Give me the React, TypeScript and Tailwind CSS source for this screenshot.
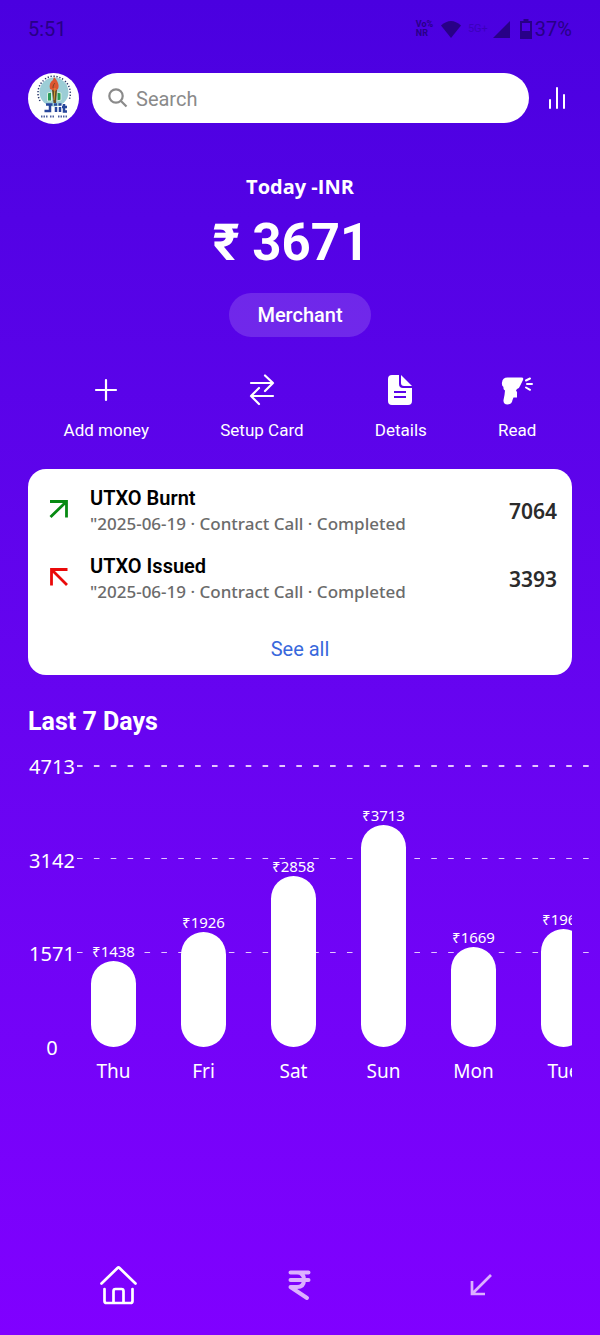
import type { ReactNode } from "react";

const days = [
  { day: "Thu", value: 1438 },
  { day: "Fri", value: 1926 },
  { day: "Sat", value: 2858 },
  { day: "Sun", value: 3713 },
  { day: "Mon", value: 1669 },
  { day: "Tue", value: 1965 },
];

const ticks = [4713, 3142, 1571, 0];
const axisMax = 4713;
const plotHeight = 282;

const transactions = [
  { title: "UTXO Burnt", amount: "7064", outgoing: true },
  { title: "UTXO Issued", amount: "3393", outgoing: false },
];

function StatusBar() {
  return (
    <div className="flex h-[58px] items-center justify-between text-[20px] text-[#280087]">
      <span>5:51</span>
      <div className="flex items-center">
        <span className="w-[19px] text-[9px] leading-[9px] font-bold">
          Vo%
          <br />
          NR
        </span>
        <svg className="ml-1 h-5 w-6" viewBox="0 0 24 20" aria-hidden="true">
          <path d="M2 6.5Q12-2.5 22 6.5L12 19z" fill="currentColor" />
        </svg>
        <span className="ml-1 w-[22px] text-center text-[11px] leading-3 opacity-40">5G+</span>
        <svg className="ml-1 h-5 w-[18px]" viewBox="0 0 18 20" aria-hidden="true">
          <path d="M17 2v17H0z" fill="currentColor" />
        </svg>
        <svg className="mr-[2px] ml-2 h-5 w-[14px]" viewBox="0 0 14 20" aria-hidden="true">
          <path d="M4.500 0h5v2H13v18H1V2h3.500zM3 4v8h8V4z" fill="currentColor" fillRule="evenodd" />
        </svg>
        <span>37%</span>
      </div>
    </div>
  );
}

function Crest() {
  return (
    <svg className="size-[51px] shrink-0" viewBox="0 0 51 51" role="img" aria-label="JIIT">
      <circle cx="25.500" cy="25.500" r="25.500" fill="#fff" />
      <circle cx="26" cy="19" r="14.500" fill="#9ccdd6" />
      <path
        d="M12 28A17 17 0 0 1 16 7M17 6Q26 0 36 7M37 8a17 17 0 0 1 4 19"
        fill="none"
        stroke="#27366b"
        strokeWidth="1.500"
        strokeDasharray="1.300 1.700"
      />
      <path d="M19.500 20l4-1v9h-4zM29 19l4 1v7l-4 1z" fill="#279a56" stroke="#d6efe0" />
      <path d="M24 17h5l-1 13h-2.500z" fill="#674a20" />
      <path d="M22 16c-1-4 0-7 3-9l1-3c3 3 6 8 4 12l-3 2z" fill="#dc5531" />
      <path d="M25 15c0-3 1-4 2-5" fill="none" stroke="#7b4524" />
      <path d="M27 15l-1 12" stroke="#d3a23a" />
      <path
        d="M18 31.500h6.500M22 31v7h-5.500M26 31.500h3M28 34v5M30.500 31.500h3M32 34v5M36 31v7.500h3M34 34h5"
        fill="none"
        stroke="#27469a"
        strokeWidth="2.500"
      />
      <path d="M13 43.500h7M22 43.500h5M30 43.500h9" stroke="#4e5fa0" strokeWidth="2" strokeDasharray="1.500 1" />
    </svg>
  );
}

function Header() {
  return (
    <header className="mt-[15px] flex items-start">
      <Crest />
      <div className="ml-[13px] flex h-[50px] min-w-0 flex-1 items-center rounded-full bg-white pl-4 text-[#8a8a8a]">
        <svg className="size-5 shrink-0" viewBox="0 0 20 20" fill="none" stroke="currentColor" strokeWidth="2.200" aria-hidden="true">
          <circle cx="8" cy="8" r="6.700" />
          <path d="M13 13l5.500 5.500" />
        </svg>
        <input
          type="search"
          aria-label="Search"
          placeholder="Search"
          className="ml-2 h-full min-w-0 flex-1 rounded-r-full bg-transparent pt-px text-[20px] outline-none placeholder:text-[#8a8a8a]"
        />
      </div>
      <button type="button" aria-label="Statistics" className="flex h-[50px] w-[43px] items-center justify-end pr-[5px] text-white">
        <svg className="h-[22px] w-5" viewBox="0 0 20 22" fill="none" stroke="currentColor" strokeWidth="2" strokeLinecap="round" aria-hidden="true">
          <path d="M3 13v8M10 1v20M17 8v13" />
        </svg>
      </button>
    </header>
  );
}

function Action({ label, children }: { label: string; children: ReactNode }) {
  return (
    <button type="button" className="flex flex-col items-center gap-3 text-[17px] leading-5 text-white">
      <svg className="size-9" viewBox="0 0 36 36" fill="none" stroke="currentColor" strokeWidth="2.200" strokeLinecap="round" strokeLinejoin="round" aria-hidden="true">
        {children}
      </svg>
      {label}
    </button>
  );
}

function Actions() {
  return (
    <div className="mt-[35px] flex justify-around">
      <Action label="Add money">
        <path d="M8 18h20M18 8v20" />
      </Action>
      <Action label="Setup Card">
        <path d="M7 11h22M21 3.500l8 7.500-8 8M29 24H7M15 16l-8 8 8 8" />
      </Action>
      <Action label="Details">
        <path
          d="M9 3h7v9a4 4 0 0 0 4 4h9v13a4 4 0 0 1-4 4H9a4 4 0 0 1-4-4V7a4 4 0 0 1 4-4zM11 19v2h12v-2zM11 24v2h12v-2z"
          fill="currentColor"
          fillRule="evenodd"
          stroke="none"
        />
        <path d="M18 3l11 11h-8a3 3 0 0 1-3-3z" fill="currentColor" stroke="none" />
      </Action>
      <Action label="Read">
        <path
          d="M8.500 5.500H22.500q2.500 0 1.500 2.500L21 14q-1 3-3 3l-1 1.500q1.500 1.500 1 3v4h-3.500l-1 2.500q-.5 4.500-5 4.500-4.500 0-4-4.500l1-5 .5-4.500q-2-1-1.500-3.500-2-1.500-1.500-4.500Q3.500 5.500 8.500 5.500z"
          fill="currentColor"
          stroke="none"
        />
        <path d="M27 8.500l4-2M28 12h5M27 15.500l4 2.300" strokeWidth="2" />
      </Action>
    </div>
  );
}

function Transactions() {
  return (
    <section className="mt-[29px] rounded-[18px] bg-white pt-4 pb-3">
      <ul>
        {transactions.map((t) => (
          <li key={t.title} className="flex h-[68px] items-start pr-[15px] pl-5">
            <svg
              className={t.outgoing ? "mt-3 size-[22px] text-[#078a12]" : "mt-3 size-[22px] text-[#ea0a0a]"}
              viewBox="0 0 22 22"
              fill="none"
              stroke="currentColor"
              strokeWidth="2.800"
              aria-hidden="true"
            >
              <path d={t.outgoing ? "M2.500 20L18 5M2 4.500h16.500v16" : "M19 20L4 5M19.500 4.500H3.500v16"} />
            </svg>
            <div className="ml-5 min-w-0 flex-1">
              <h2 className="text-[20px] leading-[26px] font-semibold text-black">{t.title}</h2>
              <p className="font-['Noto_Sans',sans-serif] text-[17px] leading-[26px] font-medium text-[#6b6b6b]">
                "2025-06-19 · Contract Call · Completed
              </p>
            </div>
            <span className="font-['Noto_Sans',sans-serif] text-[21px] leading-[52px] font-semibold text-[#2b2b2b]">
              {t.amount}
            </span>
          </li>
        ))}
      </ul>
      <div className="mt-[14px] text-center">
        <a href="#all" className="text-[20px] leading-7 text-[#3868dc]">
          See all
        </a>
      </div>
    </section>
  );
}

function Chart() {
  return (
    <section>
      <h2 className="mt-8 text-[25px] leading-[30px] font-bold">Last 7 Days</h2>
      <div className="relative mt-4 flex font-['Noto_Sans',sans-serif]">
        <svg className="absolute top-3 -right-[18px] left-[49px] h-[282px] w-[calc(100%-31px)]" fill="none" stroke="#e5c6ff" strokeDasharray="5.600 11.270" aria-hidden="true">
          <line x1="0" x2="100%" y1="1" y2="1" strokeWidth="2" />
          <line x1="0" x2="100%" y1="93.500" y2="93.500" />
          <line x1="0" x2="6" y1="187.500" y2="187.500" />
          <line x1="67.500" x2="100%" y1="187.500" y2="187.500" />
        </svg>
        <div className="flex h-[309px] w-12 shrink-0 flex-col justify-between text-center text-[20px] leading-7">
          {ticks.map((t) => (
            <span key={t}>{t}</span>
          ))}
        </div>
        <div className="relative min-w-0 flex-1 overflow-hidden">
          <div className="flex w-max gap-[45px] pl-[15px]">
            {days.map((d) => (
              <div key={d.day} className="flex w-[45px] flex-col items-center">
                <div className="flex h-[294px] flex-col items-center justify-end">
                  <span className="text-[15px] leading-5">₹{d.value}</span>
                  <div
                    className="w-[45px] rounded-full bg-white"
                    style={{ height: Math.round((d.value / axisMax) * plotHeight) }}
                  />
                </div>
                <span className="mt-[10px] text-[19px] leading-7">{d.day}</span>
              </div>
            ))}
          </div>
        </div>
      </div>
    </section>
  );
}

function BottomNav() {
  return (
    <nav className="mt-auto grid h-[100px] grid-cols-3 items-center justify-items-center">
      <a href="#home" aria-label="Home">
        <svg className="size-10" viewBox="0 0 40 40" fill="none" stroke="#fff" strokeWidth="2.700" strokeLinecap="round" strokeLinejoin="round" aria-hidden="true">
          <path d="M2.500 18.500L18.500 3q1-1 2 0l16 15.500M5.500 24v12q0 2 2 2h24q2 0 2-2V24M14.500 38V26q0-2 2-2h6q2 0 2 2v12" />
        </svg>
      </a>
      <a href="#rupee" aria-label="Payments">
        <svg className="h-8 w-6" viewBox="0 0 24 32" fill="none" stroke="#dcb0ff" strokeWidth="4" strokeLinecap="round" strokeLinejoin="round" aria-hidden="true">
          <path d="M2.500 3.500h18M2.500 11h18M9 3.500q7 0 7 7.500 0 7-7 7H2.500l16.500 11" />
        </svg>
      </a>
      <a href="#receive" aria-label="Receive">
        <svg className="size-6" viewBox="0 0 24 24" fill="none" stroke="#dcb0ff" strokeWidth="2.700" aria-hidden="true">
          <path d="M22 2L3 21M3 8v13h13" />
        </svg>
      </a>
    </nav>
  );
}

export default function App() {
  return (
    <main className="flex min-h-screen flex-col overflow-x-hidden bg-linear-to-b from-[#4a00e0] to-[#8000ff] px-7 font-[Roboto,sans-serif] text-white">
      <StatusBar />
      <Header />
      <section className="mt-[49px] flex flex-col items-center">
        <h1 className="font-['Open_Sans',sans-serif] text-[20px] leading-7 font-bold">Today -INR</h1>
        <p className="mt-3 mr-[18px] text-[51px] leading-[60px] font-bold">₹ 3671</p>
        <button type="button" className="mt-5 h-11 rounded-full bg-white/15 px-7 text-[20px] font-medium">
          Merchant
        </button>
      </section>
      <Actions />
      <Transactions />
      <Chart />
      <BottomNav />
    </main>
  );
}
